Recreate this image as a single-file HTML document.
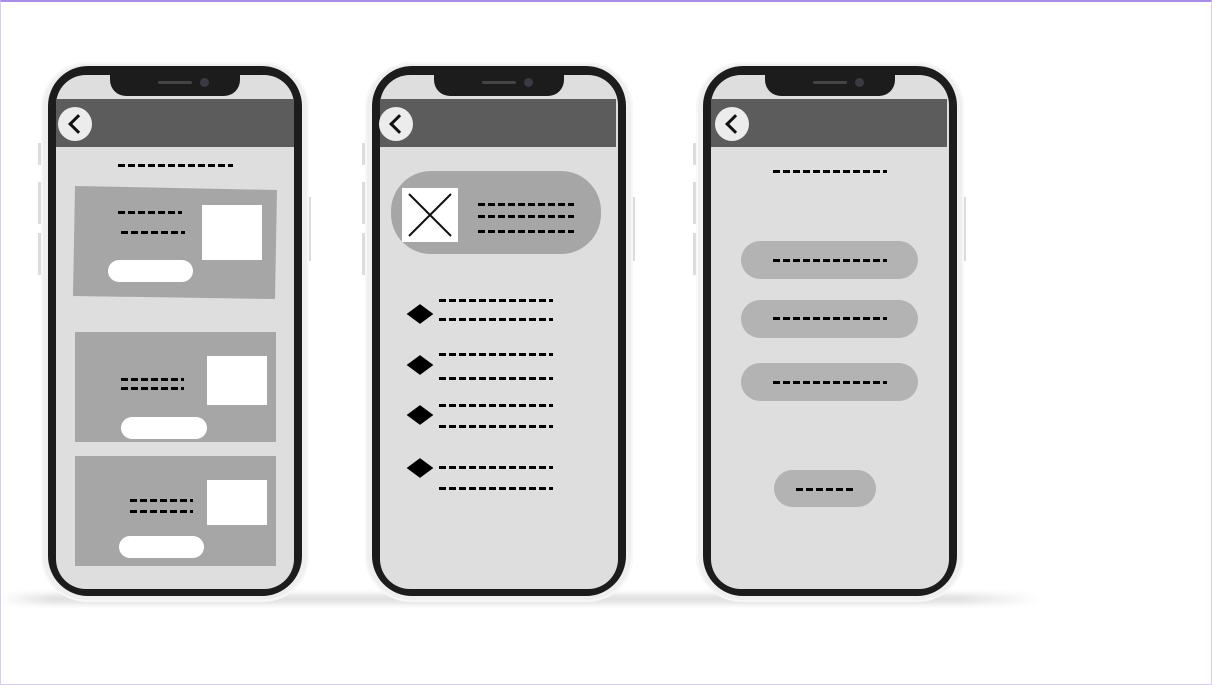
<!DOCTYPE html><html><head><style>
*{margin:0;padding:0;box-sizing:border-box}
body{width:1212px;height:685px;background:#fff;position:relative;overflow:hidden;font-family:"Liberation Sans",sans-serif}
.a{position:absolute}
.frame{border-radius:46px;background:#efefef;box-shadow:inset 0 0 0 2px #f7f7f7}
.bez{border-radius:40px;background:#1c1c1c}
.scr{border-radius:30px;background:#dedede;overflow:hidden}
.hdr{background:#5c5c5c}
.notch{background:#1c1c1c;border-radius:0 0 16px 16px}
.back{width:34px;height:34px;border-radius:50%;background:#ececec}
.back:after{content:"";position:absolute;left:13px;top:10px;width:11px;height:11px;border-left:3px solid #111;border-bottom:3px solid #111;transform:rotate(45deg)}
.d{height:2.5px;background:repeating-linear-gradient(90deg,#000 0 7px,transparent 7px 10px)}
.g{background:#a6a6a6}
.w{background:#fff}
.p{background:#b3b3b3}
.dia{width:14px;height:14px;background:#000;transform:scaleX(1.35) rotate(45deg)}
.btn{background:#dcdcdc}
</style></head><body>
<div class="a" style="left:0;top:0;width:1212px;height:685px;border:1px solid #d9ccf5;border-top:2px solid #a98be8"></div>
<div class="a" style="left:0;top:594px;width:1040px;height:10px;background:linear-gradient(90deg,rgba(0,0,0,0),rgba(0,0,0,.12) 5%,rgba(0,0,0,.12) 92%,rgba(0,0,0,0));filter:blur(3px)"></div>

<!-- phone 1 -->
<div class="a btn" style="left:38px;top:143px;width:4px;height:22px"></div>
<div class="a btn" style="left:38px;top:182px;width:4px;height:42px"></div>
<div class="a btn" style="left:38px;top:233px;width:4px;height:42px"></div>
<div class="a btn" style="left:307px;top:197px;width:4px;height:64px"></div>
<div class="a frame" style="left:41px;top:62px;width:268px;height:540px"></div>
<div class="a bez" style="left:48px;top:66px;width:254px;height:530px"></div>
<div class="a scr" style="left:56px;top:75px;width:238px;height:514px"></div>
<div class="a hdr" style="left:56px;top:99px;width:238px;height:48px"></div>
<div class="a notch" style="left:110px;top:70px;width:130px;height:26px"></div>
<div class="a" style="left:158px;top:81px;width:34px;height:3px;background:#444;border-radius:2px"></div>
<div class="a" style="left:200px;top:78px;width:9px;height:9px;background:#3a3a44;border-radius:50%"></div>
<div class="a back" style="left:58px;top:107px"></div>
<div class="a d" style="left:118px;top:164px;width:115px"></div>
<svg class="a" style="left:0;top:0" width="300" height="320"><polygon points="75,186 277,190 275,299 73,296" fill="#a6a6a6"/></svg>
<div class="a d" style="left:118px;top:211px;width:64px"></div>
<div class="a d" style="left:121px;top:231px;width:64px"></div>
<div class="a w" style="left:202px;top:205px;width:60px;height:55px"></div>
<div class="a w" style="left:108px;top:260px;width:85px;height:22px;border-radius:11px"></div>
<div class="a g" style="left:75px;top:332px;width:201px;height:110px"></div>
<div class="a d" style="left:121px;top:378px;width:63px"></div>
<div class="a d" style="left:121px;top:387px;width:63px"></div>
<div class="a w" style="left:207px;top:356px;width:60px;height:49px"></div>
<div class="a w" style="left:121px;top:417px;width:86px;height:22px;border-radius:11px"></div>
<div class="a g" style="left:75px;top:456px;width:201px;height:110px"></div>
<div class="a d" style="left:130px;top:499px;width:63px"></div>
<div class="a d" style="left:130px;top:510px;width:63px"></div>
<div class="a w" style="left:207px;top:480px;width:60px;height:45px"></div>
<div class="a w" style="left:119px;top:536px;width:85px;height:22px;border-radius:11px"></div>

<!-- phone 2 -->
<div class="a btn" style="left:362px;top:143px;width:4px;height:22px"></div>
<div class="a btn" style="left:362px;top:182px;width:4px;height:42px"></div>
<div class="a btn" style="left:362px;top:233px;width:4px;height:42px"></div>
<div class="a btn" style="left:631px;top:197px;width:4px;height:64px"></div>
<div class="a frame" style="left:365px;top:62px;width:268px;height:540px"></div>
<div class="a bez" style="left:372px;top:66px;width:254px;height:530px"></div>
<div class="a scr" style="left:380px;top:75px;width:238px;height:514px"></div>
<div class="a hdr" style="left:380px;top:99px;width:236px;height:48px"></div>
<div class="a notch" style="left:434px;top:70px;width:130px;height:26px"></div>
<div class="a" style="left:482px;top:81px;width:34px;height:3px;background:#444;border-radius:2px"></div>
<div class="a" style="left:524px;top:78px;width:9px;height:9px;background:#3a3a44;border-radius:50%"></div>
<div class="a back" style="left:379px;top:107px"></div>
<div class="a g" style="left:391px;top:171px;width:210px;height:83px;border-radius:40px"></div>
<svg class="a" style="left:402px;top:188px" width="56" height="54"><rect width="56" height="54" fill="#fff"/><path d="M7 6L49 48M49 6L7 48" stroke="#111" stroke-width="2"/></svg>
<div class="a d" style="left:478px;top:203px;width:96px"></div>
<div class="a d" style="left:478px;top:215px;width:96px"></div>
<div class="a d" style="left:478px;top:230px;width:96px"></div>
<div class="a dia" style="left:413px;top:307px"></div>
<div class="a d" style="left:439px;top:299px;width:114px"></div>
<div class="a d" style="left:439px;top:318px;width:114px"></div>
<div class="a dia" style="left:413px;top:358px"></div>
<div class="a d" style="left:439px;top:353px;width:114px"></div>
<div class="a d" style="left:439px;top:377px;width:114px"></div>
<div class="a dia" style="left:413px;top:408px"></div>
<div class="a d" style="left:439px;top:404px;width:114px"></div>
<div class="a d" style="left:439px;top:425px;width:114px"></div>
<div class="a dia" style="left:413px;top:461px"></div>
<div class="a d" style="left:439px;top:466px;width:114px"></div>
<div class="a d" style="left:439px;top:487px;width:114px"></div>

<!-- phone 3 -->
<div class="a btn" style="left:693px;top:143px;width:4px;height:22px"></div>
<div class="a btn" style="left:693px;top:182px;width:4px;height:42px"></div>
<div class="a btn" style="left:693px;top:233px;width:4px;height:42px"></div>
<div class="a btn" style="left:962px;top:197px;width:4px;height:64px"></div>
<div class="a frame" style="left:696px;top:62px;width:268px;height:540px"></div>
<div class="a bez" style="left:703px;top:66px;width:254px;height:530px"></div>
<div class="a scr" style="left:711px;top:75px;width:238px;height:514px"></div>
<div class="a hdr" style="left:711px;top:99px;width:236px;height:48px"></div>
<div class="a notch" style="left:765px;top:70px;width:130px;height:26px"></div>
<div class="a" style="left:813px;top:81px;width:34px;height:3px;background:#444;border-radius:2px"></div>
<div class="a" style="left:855px;top:78px;width:9px;height:9px;background:#3a3a44;border-radius:50%"></div>
<div class="a back" style="left:715px;top:107px"></div>
<div class="a d" style="left:773px;top:170px;width:114px"></div>
<div class="a p" style="left:741px;top:241px;width:177px;height:38px;border-radius:19px"></div>
<div class="a d" style="left:773px;top:259px;width:114px"></div>
<div class="a p" style="left:741px;top:300px;width:177px;height:38px;border-radius:19px"></div>
<div class="a d" style="left:773px;top:317px;width:114px"></div>
<div class="a p" style="left:741px;top:363px;width:177px;height:38px;border-radius:19px"></div>
<div class="a d" style="left:773px;top:381px;width:114px"></div>
<div class="a p" style="left:774px;top:470px;width:102px;height:37px;border-radius:19px"></div>
<div class="a d" style="left:796px;top:488px;width:58px"></div>
</body></html>
